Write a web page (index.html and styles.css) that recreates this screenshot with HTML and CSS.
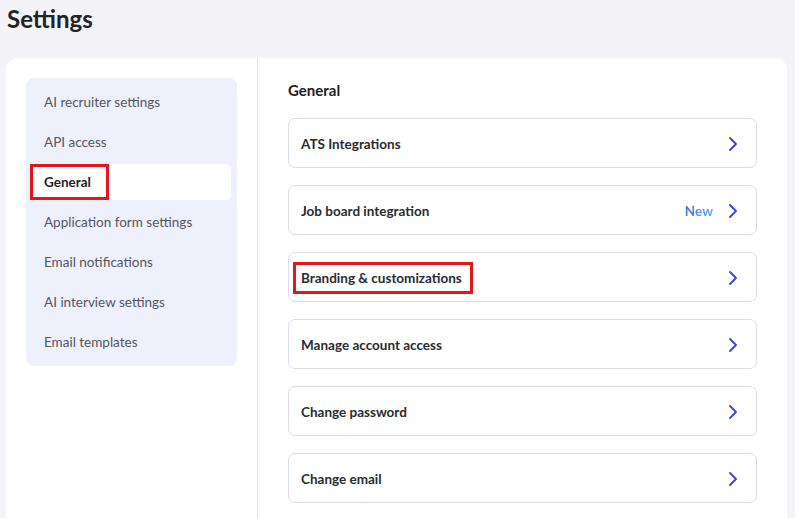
FILE: index.html
```html
<!DOCTYPE html>
<html>
<head>
<meta charset="utf-8">
<link rel="stylesheet" href="styles.css">
</head>
<body>
<div class="page">
  <h1 class="title">Settings</h1>
  <div class="card">
    <aside class="side">
      <nav class="nav">
        <div class="nav-item">AI recruiter settings</div>
        <div class="nav-item">API access</div>
        <div class="nav-item active"><span class="mark">General</span></div>
        <div class="nav-item">Application form settings</div>
        <div class="nav-item">Email notifications</div>
        <div class="nav-item">AI interview settings</div>
        <div class="nav-item">Email templates</div>
      </nav>
    </aside>
    <main class="main">
      <h2 class="heading">General</h2>
      <div class="rows">
        <div class="row"><span class="label">ATS Integrations</span><span class="right"><svg class="chev" viewBox="0 0 10 16"><path d="M2 2l6 6-6 6"/></svg></span></div>
        <div class="row"><span class="label">Job board integration</span><span class="right"><span class="new">New</span><svg class="chev" viewBox="0 0 10 16"><path d="M2 2l6 6-6 6"/></svg></span></div>
        <div class="row"><span class="label mark2">Branding &amp; customizations</span><span class="right"><svg class="chev" viewBox="0 0 10 16"><path d="M2 2l6 6-6 6"/></svg></span></div>
        <div class="row"><span class="label">Manage account access</span><span class="right"><svg class="chev" viewBox="0 0 10 16"><path d="M2 2l6 6-6 6"/></svg></span></div>
        <div class="row"><span class="label">Change password</span><span class="right"><svg class="chev" viewBox="0 0 10 16"><path d="M2 2l6 6-6 6"/></svg></span></div>
        <div class="row"><span class="label">Change email</span><span class="right"><svg class="chev" viewBox="0 0 10 16"><path d="M2 2l6 6-6 6"/></svg></span></div>
      </div>
    </main>
  </div>
</div>
</body>
</html>
```
FILE: styles.css
```css
html, body {
  margin: 0;
  padding: 0;
  background: #f3f3f8;
  font-family: Lato, "Noto Sans", sans-serif;
  color: #222;
  overflow: hidden;
  height: 518px;
}
.page {
  padding: 0 8px 0 6px;
}
.title {
  margin: 0;
  padding: 5px 0 0 1px;
  height: 35px;
  font-size: 24px;
  line-height: 28px;
  font-weight: 700;
  color: #222326;
  letter-spacing: 0;
}
.card {
  margin-top: 18px;
  background: #fff;
  border-radius: 12px 12px 0 0;
  display: flex;
  height: 480px;
}
.side {
  width: 211px;
  padding: 20px;
  border-right: 1px solid #e3e3ec;
}
.nav {
  background: #eef0fc;
  border-radius: 8px;
  padding: 6px 6px 6px 4px;
  display: flex;
  flex-direction: column;
  gap: 4px;
}
.nav-item {
  height: 36px;
  display: flex;
  align-items: center;
  padding-left: 14px;
  font-size: 13.5px;
  color: #55565c;
  border-radius: 5px;
}
.nav-item.active {
  background: #fff;
  color: #1f2024;
  font-weight: 700;
  padding-left: 0;
}
.mark {
  height: 30px;
  display: flex;
  align-items: center;
  padding: 0 15px 0 11px;
  border: 3px solid #e0181e;
}
.main {
  flex: 1;
  padding: 22px 30px 0 30px;
}
.heading {
  margin: 0 0 18px 0;
  font-size: 15px;
  line-height: 20px;
  font-weight: 700;
  color: #1f2024;
}
.rows {
  display: flex;
  flex-direction: column;
  gap: 17px;
}
.row {
  height: 48px;
  border: 1px solid #dcdcea;
  border-radius: 7px;
  display: flex;
  align-items: center;
  justify-content: space-between;
  padding: 1px 18px 0 12px;
  box-sizing: content-box;
  height: 47px;
}
.label {
  font-size: 13.5px;
  font-weight: 700;
  color: #2a2b30;
}
.mark2 {
  margin-left: -8px;
  padding: 4px 8px 4px 5px;
  border: 3px solid #e0181e;
  line-height: 18px;
}
.right {
  display: flex;
  align-items: center;
  gap: 15px;
}
.new {
  font-size: 13.5px;
  font-weight: 700;
  background: linear-gradient(90deg, #4a6fe6, #5aa8ea);
  -webkit-background-clip: text;
  background-clip: text;
  color: transparent;
}
.chev {
  width: 10px;
  height: 16px;
  fill: none;
  stroke: #3a46d4;
  stroke-width: 1.9;
  stroke-linecap: round;
  stroke-linejoin: round;
}
```
